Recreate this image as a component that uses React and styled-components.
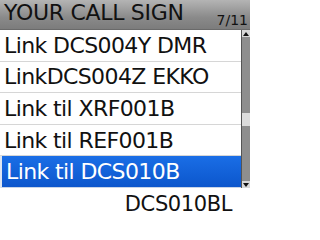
import React from "react";
import styled, { createGlobalStyle } from "styled-components";

const Global = createGlobalStyle`
  html, body { margin: 0; padding: 0; background: #fff; }
  body { width: 250px; height: 219px; overflow: hidden; font-family: "DejaVu Sans", sans-serif; }
`;

const Screen = styled.div`
  width: 250px;
  height: 219px;
  display: flex;
  flex-direction: column;
  background: #fff;
`;

const Header = styled.div`
  height: 30px;
  display: flex;
  align-items: flex-end;
  justify-content: space-between;
  background: linear-gradient(#b4b4b4, #8a8a8a 60%, #7c7c7c);
  border-bottom: 1px solid #6a6a6a;
  box-sizing: border-box;
`;

const Title = styled.div`
  font-size: 22px;
  line-height: 28px;
  padding-left: 4px;
  padding-bottom: 2px;
  color: #111;
  letter-spacing: -0.3px;
`;

const Counter = styled.div`
  font-size: 14px;
  line-height: 16px;
  padding-right: 2px;
  padding-bottom: 1px;
  color: #111;
`;

const Body = styled.div`
  display: flex;
  height: 158px;
`;

const List = styled.div`
  flex: 1;
  display: flex;
  flex-direction: column;
  border-right: 1px solid #555;
`;

const Row = styled.div`
  flex: 1;
  display: flex;
  align-items: center;
  padding-left: 4px;
  font-size: 22px;
  letter-spacing: -0.6px;
  color: ${(p) => (p.$sel ? "#fff" : "#111")};
  background: ${(p) => (p.$sel ? "linear-gradient(#1a6ee6, #0c56cc)" : "#fff")};
  border-bottom: 1px solid ${(p) => (p.$sel ? "#c8d4e8" : "#d6d6d6")};
  border-left: ${(p) => (p.$sel ? "2px solid #dfe6f0" : "none")};
  box-sizing: border-box;
  white-space: nowrap;
`;

const Scroll = styled.div`
  width: 8px;
  display: flex;
  flex-direction: column;
  background: #8e8e8e;
`;

const Arrow = styled.div`
  height: 7px;
  background: #d8d8d8;
  display: flex;
  align-items: center;
  justify-content: center;
`;

const Track = styled.div`
  flex: 1;
  display: flex;
  flex-direction: column;
`;

const Gap = styled.div`
  height: ${(p) => p.$h}px;
`;

const Thumb = styled.div`
  height: 13px;
  background: #dcdcdc;
`;

const Footer = styled.div`
  flex: 1;
  display: flex;
  justify-content: flex-end;
  align-items: center;
  padding-right: 18px;
  font-size: 21px;
  letter-spacing: -0.4px;
  color: #111;
`;

const Tri = ({ up }) => (
  <svg width="6" height="4" viewBox="0 0 6 4">
    <polygon points={up ? "3,0 6,4 0,4" : "0,0 6,0 3,4"} fill="#111" />
  </svg>
);

const items = [
  "Link DCS004Y DMR",
  "LinkDCS004Z EKKO",
  "Link til XRF001B",
  "Link til REF001B",
  "Link til DCS010B",
];

export default function App() {
  return (
    <>
      <Global />
      <Screen>
        <Header>
          <Title>YOUR CALL SIGN</Title>
          <Counter>7/11</Counter>
        </Header>
        <Body>
          <List>
            {items.map((t, i) => (
              <Row key={t} $sel={i === 4}>{t}</Row>
            ))}
          </List>
          <Scroll>
            <Arrow><Tri up /></Arrow>
            <Track>
              <Gap $h={76} />
              <Thumb />
            </Track>
            <Arrow><Tri /></Arrow>
          </Scroll>
        </Body>
        <Footer>DCS010BL</Footer>
      </Screen>
    </>
  );
}
